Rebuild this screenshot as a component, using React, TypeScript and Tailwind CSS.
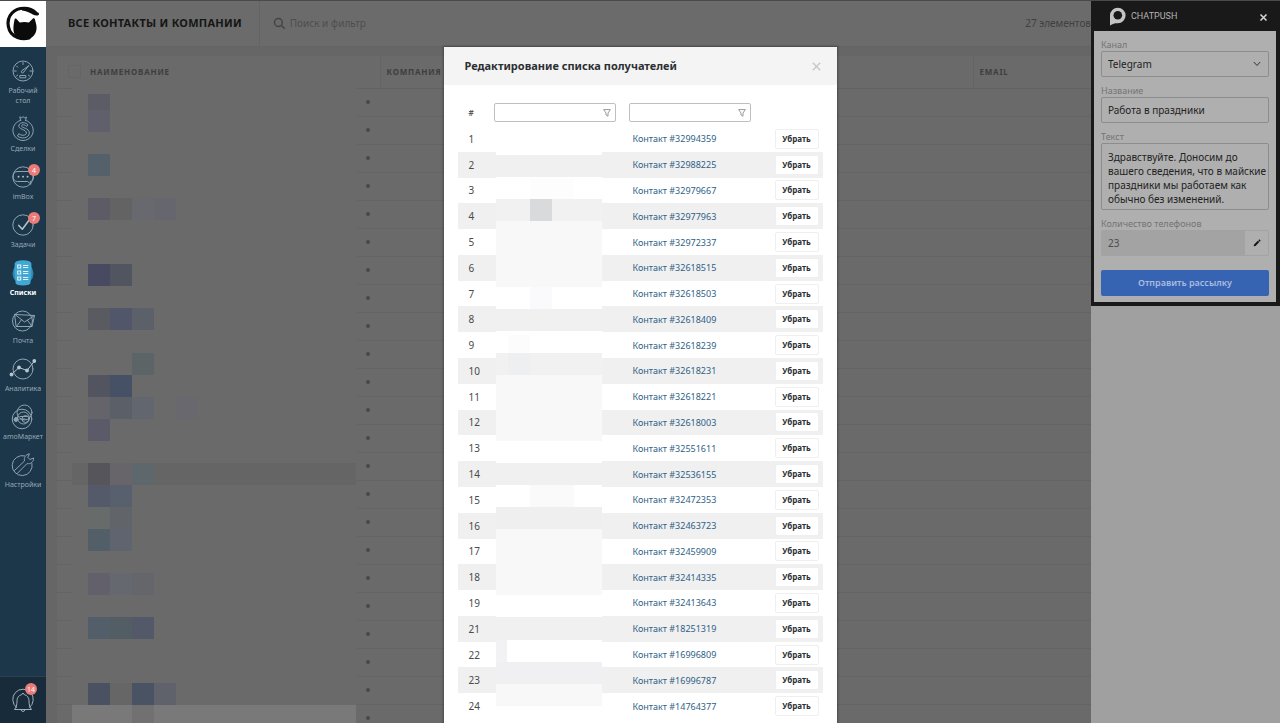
import React from 'react';

type Block = [number, number, number, number, string];

const line = { fill: 'none', stroke: '#8fa3b1', strokeWidth: 1, strokeLinecap: 'round', strokeLinejoin: 'round' } as const;

function DashboardIcon() {
  return (
    <svg viewBox="0 0 28 26" className="h-[26px] w-7" {...line}>
      <circle cx="14" cy="13" r="10" />
      <path d="M14 4.5v2M7.5 8l1.200 1.200M5.200 13h2M22.800 13h-2M7.500 18l1.200-1M20.500 18l-1.200-1M14.800 14l4.800-6.200M13 12.600l6.600-4.800M13 12.600a1.300 1.300 0 1 0 1.800 1.400M11.200 17.500h5.600v2.300h-5.600z" />
    </svg>
  );
}

function DealsIcon() {
  return (
    <svg viewBox="0 0 28 26" className="h-[26px] w-7" {...line}>
      <path d="M11.600 4.400 10.800.8l2 1 1.300-1.200 1.300 1.200 2-.8-.8 3.400M11.600 4.400a10.200 10.200 0 1 0 4.900 0" />
      <path d="M18.600 8.400c-2-2.200-7.200-2.600-8.600.6-2 4.400 8 4.200 7.400 8.200-.6 2.800-5.400 2.600-7.600.4l-1.300 2.400c3.600 3.200 11.500 2.400 11.800-2.800.3-5.600-8.300-5-7.700-7.400.6-1.800 3.600-1 4.800.4z" />
    </svg>
  );
}

function ChatIcon() {
  return (
    <svg viewBox="0 0 28 26" className="h-[26px] w-7" {...line}>
      <circle cx="14" cy="13" r="10.200" />
      <path d="M8.500 7.500h11.500c2.500 0 4.500 1.800 4.500 4.500v1.500c0 2.200-1.500 3.500-3.200 3.800l.7 3-3.500-2.800H8.500c-2.600 0-4.300-1.800-4.300-4.300v-1.400c0-2.600 1.800-4.300 4.300-4.300z" />
      <path d="M9.500 12.700h.1M14 12.700h.1M18.500 12.700h.1" strokeWidth="1.800" stroke="#b6c4ce" />
    </svg>
  );
}

function TasksIcon() {
  return (
    <svg viewBox="0 0 28 26" className="h-[26px] w-7" {...line}>
      <circle cx="14" cy="13" r="10.200" />
      <path d="M9.800 13.400l3.500 3.800 6.700-9" strokeWidth="1.500" stroke="#b6c4ce" />
    </svg>
  );
}

function ListsIcon() {
  return (
    <svg viewBox="0 0 28 26" className="h-[26px] w-7" fill="none">
      <circle cx="14" cy="13.500" r="10.500" fill="#2c86b4" />
      <path d="M7.500 1.300Q14-.6 20.500 1.300L22.300 3Q23 13 21.300 23.200L19.800 24.800Q14 26.400 8.200 24.800L6.700 23.200Q5 13 5.700 3z" fill="#41a7d3" />
      <path d="M8.700 5h3v3h-3zM8.700 11h3v3h-3zM8.700 17h3v3h-3zM14 5.500h5.300M14 7.500h5.300M14 11.500h5.300M14 13.500h5.300M14 17.500h5.300M14 19.500h5.300" stroke="#e3f3fa" strokeWidth="1.100" />
    </svg>
  );
}

function MailIcon() {
  return (
    <svg viewBox="0 0 28 26" className="h-[26px] w-7" {...line}>
      <circle cx="13.500" cy="13" r="10" />
      <path d="M6 6.500 25.500 7.500 23 18.500H7.500zM6 6.500l9.500 7.500 10-6.500M7.500 18.500l5-6.800M23 18.500l-4.600-6.300" />
    </svg>
  );
}

function AnalyticsIcon() {
  return (
    <svg viewBox="0 0 28 26" className="h-[26px] w-7" {...line}>
      <circle cx="14" cy="13" r="10" />
      <path d="M2.500 18.500 10 11.500l8 3L25.500 5" stroke="#b6c4ce" />
      <g fill="#b6c4ce" stroke="none">
        <circle cx="2.500" cy="18.500" r="1.900" />
        <circle cx="10" cy="11.500" r="1.900" />
        <circle cx="18" cy="14.500" r="1.900" />
        <circle cx="25.300" cy="5" r="1.900" />
      </g>
    </svg>
  );
}

function MarketIcon() {
  return (
    <svg viewBox="0 0 28 26" className="h-[26px] w-7" {...line}>
      <circle cx="13" cy="15" r="9.800" />
      <circle cx="15.500" cy="8.500" r="7.500" />
      <circle cx="14.500" cy="14" r="6" />
      <circle cx="16.500" cy="15" r="3.500" />
      <path d="M11 12.500h7.500M11 15h5" />
      <circle cx="7" cy="15.500" r="2" fill="#8fa3b1" />
    </svg>
  );
}

function SettingsIcon() {
  return (
    <svg viewBox="0 0 28 26" className="h-[26px] w-7" {...line}>
      <path d="M15.500 3.800A10 10 0 1 0 23 11.500" />
      <path d="M5.500 18.500 15.500 9c-.8-3 1-6.700 5-7.200l-1.700 3.500 2 2.200 3.800-1.500c.3 3.500-3 6.500-6.600 5.600L8.200 21.500" />
    </svg>
  );
}

function BellIcon() {
  return (
    <svg viewBox="0 0 28 28" className="h-7 w-7" {...line} stroke="#9fb0bb">
      <path d="M7.500 21.500A10.300 10.300 0 1 1 20.500 21.500" />
      <path d="M14 7.500a1.300 1.300 0 0 1 1.400 1.200c3 .8 4.600 3 4.600 6 0 4.600.8 6.600 2.500 8.800h-17C7.200 21.300 8 19.300 8 14.700c0-3 1.600-5.200 4.600-6A1.300 1.300 0 0 1 14 7.500zM12 24a2.100 2.100 0 0 0 4 0" />
    </svg>
  );
}

interface NavItem {
  label: string;
  icon: React.ReactNode;
  badge?: string;
  active?: boolean;
}

const nav: NavItem[] = [
  { label: 'Рабочий\nстол', icon: <DashboardIcon /> },
  { label: 'Сделки', icon: <DealsIcon /> },
  { label: 'imBox', icon: <ChatIcon />, badge: '4' },
  { label: 'Задачи', icon: <TasksIcon />, badge: '7' },
  { label: 'Списки', icon: <ListsIcon />, active: true },
  { label: 'Почта', icon: <MailIcon /> },
  { label: 'Аналитика', icon: <AnalyticsIcon /> },
  { label: 'amoМаркет', icon: <MarketIcon /> },
  { label: 'Настройки', icon: <SettingsIcon /> },
];

function Sidebar() {
  return (
    <aside className="flex w-[46px] shrink-0 flex-col bg-[#1c364a]">
      <a href="#home" aria-label="Главная" className="flex h-[47px] shrink-0 items-center justify-center bg-white">
        <svg viewBox="0 0 46 47" className="h-[47px] w-[46px]">
          <path d="M35.500 12.500C30.500 7 18 6.500 12 13 5.500 20 7 34 17.500 37.500 21 38.700 26 38.700 29 38" fill="none" stroke="#0b0b0b" strokeWidth="3.200" strokeLinecap="round" />
          <path d="M22 7c5.500 0 10 1.800 12.500 4 1.600 1.200 4.500 1 4.500 3 0 1.900-3.500 2-5.700.8C30 13 26 11 22 10.600z" fill="#0b0b0b" />
          <path d="M14.600 19.300c.2-1 1.200-1.200 1.900-.4l3.200 3.600c3-.8 6.500-.8 9.200 0l4-3.900c.8-.7 1.800-.4 2 .6.7 2.900 1.700 5.500 1.700 8.300 0 7.500-5 12-12 12-6.500 0-11.200-4-11.200-10.500 0-3.500.5-6.500 1.200-9.700z" fill="#0b0b0b" />
        </svg>
      </a>
      <nav className="flex flex-1 flex-col pt-[11px]">
        {nav.map((item) => (
          <a key={item.label} href={'#' + item.label} className="relative flex flex-col items-center gap-[2px] pb-[10px]">
            {item.icon}
            {item.badge && (
              <span className="absolute top-0 left-[28px] flex h-3 min-w-3 items-center justify-center rounded-full bg-[#ea7b78] text-[7px] leading-none text-white">
                {item.badge}
              </span>
            )}
            <span className={item.active ? 'text-center text-[7px] leading-[10px] font-bold text-white' : 'text-center text-[7px] leading-[10px] whitespace-pre-line text-[#98a9b5]'}>
              {item.label}
            </span>
          </a>
        ))}
      </nav>
      <button type="button" aria-label="Уведомления" className="relative flex h-[47px] shrink-0 items-center justify-center border-t border-[#2a4254] bg-[#182b3a]">
        <BellIcon />
        <span className="absolute top-[6px] left-[25px] flex h-3 min-w-3 items-center justify-center rounded-full bg-[#ea7b78] text-[7px] leading-none text-white">14</span>
      </button>
    </aside>
  );
}

function Mosaic({ blocks, className }: { blocks: Block[]; className: string }) {
  return (
    <svg className={className} aria-hidden="true" shapeRendering="crispEdges">
      {blocks.map(([x, y, w, h, fill]) => (
        <rect key={x + '-' + y + '-' + w} x={x} y={y} width={w} height={h} fill={fill} />
      ))}
    </svg>
  );
}

/* Hidden names in the list: x, y, width, height, colour */
const nameBlocks: Block[] = [
  [0, 0, 285, 640, '#6a6a6a'],
  [16, 6, 22, 16, '#5c5c66'], [16, 22, 22, 22, '#5f606b'],
  [16, 66, 22, 22, '#55616a'],
  [16, 110, 22, 22, '#5c5b66'], [38, 110, 22, 22, '#636363'], [60, 110, 22, 22, '#67696e'], [82, 110, 22, 22, '#66666e'],
  [16, 176, 22, 22, '#474a60'], [38, 176, 22, 22, '#50555f'],
  [16, 220, 22, 22, '#595b60'], [38, 220, 22, 22, '#52566a'], [60, 220, 22, 22, '#5c6069'],
  [60, 265, 22, 22, '#5c6467'],
  [16, 287, 22, 22, '#52545f'], [38, 287, 22, 22, '#475166'],
  [16, 309, 22, 22, '#64646a'], [38, 309, 22, 22, '#5b5f68'], [60, 309, 22, 22, '#62666e'], [104, 309, 22, 22, '#68686e'],
  [16, 331, 22, 22, '#5a5a68'],
  [0, 375, 284, 22, '#656565'],
  [16, 375, 22, 22, '#57555c'], [38, 375, 22, 22, '#67646a'], [60, 375, 22, 22, '#5e686c'],
  [16, 397, 22, 22, '#545a6a'], [38, 397, 22, 22, '#58606e'],
  [16, 419, 22, 22, '#676b69'], [38, 419, 22, 22, '#616569'],
  [16, 441, 22, 22, '#525e68'], [38, 441, 22, 22, '#60646e'],
  [16, 485, 22, 22, '#62606a'], [38, 485, 22, 22, '#65686e'], [60, 485, 22, 22, '#64666c'],
  [16, 529, 22, 22, '#525e69'], [38, 529, 22, 22, '#535d64'], [60, 529, 22, 22, '#535969'],
  [16, 595, 22, 22, '#4a5160'], [38, 595, 22, 22, '#666667'], [60, 595, 22, 22, '#4a5364'], [82, 595, 22, 22, '#5f626b'],
  [0, 617, 284, 23, '#797979'], [60, 617, 22, 23, '#717171'],
];

const rowKeys = Array.from({ length: 23 }, (_, i) => i);

function ContactsPage() {
  return (
    <main className="flex min-w-0 flex-1 flex-col overflow-hidden bg-[#666666]">
      <header className="flex h-[47px] shrink-0 items-center border-b border-[#646464] bg-[#6b6b6b]">
        <h1 className="w-[214px] self-stretch border-r border-[#646464] pl-[22px] text-[11px] leading-[46px] font-bold tracking-wide whitespace-nowrap text-[#161616]">
          ВСЕ КОНТАКТЫ И КОМПАНИИ
        </h1>
        <label className="flex flex-1 items-center gap-1 pl-[13px]">
          <svg viewBox="0 0 13 13" className="h-[13px] w-[13px]" fill="none" stroke="#444444" strokeWidth="1.500">
            <circle cx="5.500" cy="5.500" r="4" />
            <path d="M8.500 8.500l3.500 3.200" />
          </svg>
          <input type="text" aria-label="Поиск и фильтр" placeholder="Поиск и фильтр" className="w-full bg-transparent text-[10px] outline-none placeholder:text-[#4e4e4e]" />
        </label>
        <span className="text-[10px] whitespace-nowrap text-[#404040]">27 элементов</span>
      </header>
      <div className="relative mt-[9px] ml-[11px]">
        <table className="w-full table-fixed border-collapse bg-[#6a6a6a] text-left">
          <colgroup>
            <col className="w-[33px]" />
            <col className="w-[290px]" />
            <col className="w-[593px]" />
            <col />
          </colgroup>
          <thead>
            <tr className="h-8 border-b border-[#626262] text-[8px] tracking-widest text-[#3e3e3e]">
              <th className="pl-[11px]">
                <input type="checkbox" aria-label="Выбрать все" className="block h-[13px] w-[13px] appearance-none border border-[#656565]" />
              </th>
              <th className="font-bold">НАИМЕНОВАНИЕ</th>
              <th className="border-l border-[#646464] pl-[6px] font-bold">КОМПАНИЯ</th>
              <th className="border-l border-[#646464] pl-[6px] font-bold">EMAIL</th>
            </tr>
          </thead>
          <tbody>
            {rowKeys.map((row) => (
              <tr key={row} className="h-7 border-b border-[#646464]">
                <td />
                <td className="pr-[10px]">
                  <span className="ml-auto block h-1 w-1 rounded-full bg-[#484848]" />
                </td>
                <td />
                <td />
              </tr>
            ))}
          </tbody>
        </table>
        <Mosaic blocks={nameBlocks} className="absolute top-8 left-[15px] h-[640px] w-[285px]" />
      </div>
    </main>
  );
}

const fieldClass = 'block h-[26px] w-full rounded-[2px] border border-[#8c8c8c] bg-transparent px-[6px] text-[10px] text-[#222222] outline-none';
const labelClass = 'block text-[9px] leading-[12px] text-[#747474]';

function ChatPushPanel() {
  return (
    <aside className="flex w-[189px] shrink-0 flex-col bg-[#a0a0a0]">
      <div className="border-r-4 border-b-4 border-l-[3px] border-[#191919] bg-[#afafaf]">
        <div className="flex h-[31px] items-center bg-[#191919] pt-px pr-2 pl-[14px]">
          <svg viewBox="0 0 18 20" className="h-5 w-[18px]">
            <path d="M2 19.500V9.500a7.800 7.800 0 1 1 7.800 7.800c-3.500 0-5 .5-7.800 2.200z" fill="#c4c4c4" />
            <circle cx="9.800" cy="9.200" r="4.300" fill="#191919" />
          </svg>
          <span className="pt-px pl-[5px] font-['Roboto',sans-serif] text-[9px] text-[#b5b5b5]">CHATPUSH</span>
          <button type="button" aria-label="Закрыть" className="ml-auto pt-[2px]">
            <svg viewBox="0 0 9 9" className="h-[9px] w-[9px]" stroke="#d2d2d2" strokeWidth="1.600" fill="none">
              <path d="M1.500 1.500l6 6M7.500 1.500l-6 6" />
            </svg>
          </button>
        </div>
        <form className="flex flex-col gap-2 px-[7px] pt-2 pb-[6px]" onSubmit={(e) => e.preventDefault()}>
          <div>
            <label htmlFor="channel" className={labelClass}>Канал</label>
            <div className="relative">
              <select id="channel" className="block h-[26px] w-full appearance-none rounded-[2px] border border-[#8c8c8c] bg-transparent px-[6px] text-[10px] text-[#222222] outline-none">
                <option>Telegram</option>
              </select>
              <svg viewBox="0 0 8 6" className="pointer-events-none absolute top-[10px] right-[8px] h-[6px] w-2" fill="none" stroke="#333333">
                <path d="M.8 1 4 4.500 7.200 1" />
              </svg>
            </div>
          </div>
          <div>
            <label htmlFor="title" className={labelClass}>Название</label>
            <input id="title" type="text" defaultValue="Работа в праздники" className={fieldClass} />
          </div>
          <div>
            <label htmlFor="message" className={labelClass}>Текст</label>
            <textarea
              id="message"
              defaultValue="Здравствуйте. Доносим до вашего сведения, что в майские праздники мы работаем как обычно без изменений."
              className="block h-[67px] w-full resize-none overflow-hidden rounded-[2px] border border-[#8c8c8c] bg-transparent py-[6px] pr-0 pl-[6px] text-[10px] leading-[14px] text-[#222222] outline-none"
            />
          </div>
          <div>
            <label htmlFor="phones" className={labelClass}>Количество телефонов</label>
            <div className="flex h-[26px] rounded-[2px] border border-[#a3a3a3]">
              <input id="phones" type="text" readOnly value="23" className="min-w-0 flex-1 bg-[#a3a3a3] px-[6px] text-[10px] text-[#4c4c4c] outline-none" />
              <button type="button" aria-label="Изменить список" className="flex w-[23px] items-center justify-center">
                <svg viewBox="0 0 10 10" className="h-2 w-2" fill="#151515">
                  <path d="M.8 9.200l.6-2.400 4.700-4.700 1.800 1.800-4.700 4.700zM6.700 1.500l.6-.6c.4-.4 1-.3 1.300 0l.5.5c.4.4.4.9 0 1.300l-.6.6z" />
                </svg>
              </button>
            </div>
          </div>
          <button type="submit" className="mt-[6px] h-[26px] rounded-[2px] bg-[#3763b3] text-[9px] font-semibold text-[#a9bde0]">Отправить рассылку</button>
        </form>
      </div>
    </aside>
  );
}

const recipients: [number, string][] = [
  [1, '32994359'], [2, '32988225'], [3, '32979667'], [4, '32977963'], [5, '32972337'],
  [6, '32618515'], [7, '32618503'], [8, '32618409'], [9, '32618239'], [10, '32618231'],
  [11, '32618221'], [12, '32618003'], [13, '32551611'], [14, '32536155'], [15, '32472353'],
  [16, '32463723'], [17, '32459909'], [18, '32414335'], [19, '32413643'], [21, '18251319'],
  [22, '16996809'], [23, '16996787'], [24, '14764377'],
];

/* Hidden recipient names: x, y, width, height, colour */
const recipientBlocks: Block[] = [
  [0, 0, 106, 23, '#ffffff'],
  [0, 23, 106, 22, '#f0f0f0'],
  [0, 45, 106, 22, '#ffffff'], [34, 47, 44, 20, '#fdfdfe'],
  [0, 67, 106, 22, '#f1f1f1'], [34, 67, 22, 22, '#d9dadc'],
  [0, 89, 106, 66, '#f8f8f8'],
  [0, 155, 106, 22, '#ffffff'], [34, 155, 22, 22, '#fafafc'],
  [0, 177, 106, 22, '#f0f0f0'],
  [0, 199, 106, 22, '#ffffff'], [12, 203, 22, 18, '#fcfcfd'],
  [0, 221, 106, 22, '#f1f1f2'], [12, 221, 22, 22, '#eeeff1'],
  [0, 243, 106, 66, '#f8f8f8'],
  [0, 309, 106, 22, '#ffffff'],
  [0, 331, 106, 22, '#f0f0f0'],
  [0, 353, 106, 22, '#ffffff'], [34, 353, 44, 22, '#fafafb'],
  [0, 375, 106, 22, '#efeff0'],
  [0, 397, 106, 66, '#f8f8f8'],
  [0, 463, 106, 22, '#ffffff'],
  [0, 485, 106, 23, '#f0f0f0'],
  [0, 508, 106, 22, '#ffffff'], [0, 508, 11, 22, '#f2f2f4'],
  [0, 530, 106, 22, '#f0f0f2'],
  [0, 552, 106, 22, '#f8f8f8'],
  [0, 574, 106, 22, '#ffffff'],
];

function FilterInput({ label }: { label: string }) {
  return (
    <div className="relative w-[122px]">
      <input type="text" aria-label={label} className="block h-[19px] w-full rounded-[2px] border border-[#bfbfbf] bg-white pr-5 pl-1 text-[10px] outline-none" />
      <svg viewBox="0 0 8 8" className="pointer-events-none absolute top-[6px] right-[5px] h-2 w-2" fill="none" stroke="#9a9a9a">
        <path d="M.6.6h6.800L5 4v3.200L3 6V4z" />
      </svg>
    </div>
  );
}

function RecipientsDialog() {
  return (
    <div className="absolute inset-0 flex items-start justify-center overflow-hidden pt-[47px]">
      <section role="dialog" aria-labelledby="dialog-title" className="w-[393px] bg-white pb-10 shadow-[0_0_2px_1px_rgba(0,0,0,0.3)]">
        <header className="flex h-[38px] items-center justify-between bg-[#f4f4f4] pt-px pr-4 pl-[21px]">
          <h2 id="dialog-title" className="text-[11px] font-bold text-[#2c2f33]">Редактирование списка получателей</h2>
          <button type="button" aria-label="Закрыть">
            <svg viewBox="0 0 9 9" className="h-[9px] w-[9px]" stroke="#c4c6c8" strokeWidth="1.300" fill="none">
              <path d="M.8.8l7.400 7.400M8.200.8L.8 8.200" />
            </svg>
          </button>
        </header>
        <div className="relative px-[14px] pt-[14px]">
          <table className="h-[620px] w-full table-fixed border-collapse text-left text-[9px]">
            <colgroup>
              <col className="w-[36px]" />
              <col className="w-[135px]" />
              <col className="w-[146px]" />
              <col />
            </colgroup>
            <thead>
              <tr className="h-[27px]">
                <th className="p-0 pl-[11px] text-[8px] font-semibold text-[#555555]">#</th>
                <th className="p-0"><FilterInput label="Фильтр по имени" /></th>
                <th className="p-0"><FilterInput label="Фильтр по контакту" /></th>
                <th className="p-0" />
              </tr>
            </thead>
            <tbody>
              {recipients.map(([index, id]) => (
                <tr key={id} className="even:bg-[#f0f0f0]">
                  <td className="p-0 pl-[11px] text-[10px] leading-none text-[#4a4a4a]">{index}</td>
                  <td className="p-0" />
                  <td className="p-0 pl-1 leading-none">
                    <a href={'#contact-' + id} className="whitespace-nowrap text-[#2f5f86]">{'Контакт #' + id}</a>
                  </td>
                  <td className="p-0">
                    <button type="button" className="block h-5 w-11 rounded-[2px] border border-[#efefef] bg-white text-[8px] leading-none font-bold text-[#2c2f33]">Убрать</button>
                  </td>
                </tr>
              ))}
            </tbody>
          </table>
          <Mosaic blocks={recipientBlocks} className="absolute top-[47px] left-[52px] h-[596px] w-[106px]" />
        </div>
      </section>
    </div>
  );
}

export default function App() {
  return (
    <div className="relative flex h-screen w-full overflow-hidden bg-[#6b6b6b] font-['Noto_Sans','Open_Sans',sans-serif]">
      <Sidebar />
      <ContactsPage />
      <ChatPushPanel />
      <RecipientsDialog />
      <div className="pointer-events-none absolute inset-x-0 top-0 border-t border-[#4a4a4a]" />
    </div>
  );
}
